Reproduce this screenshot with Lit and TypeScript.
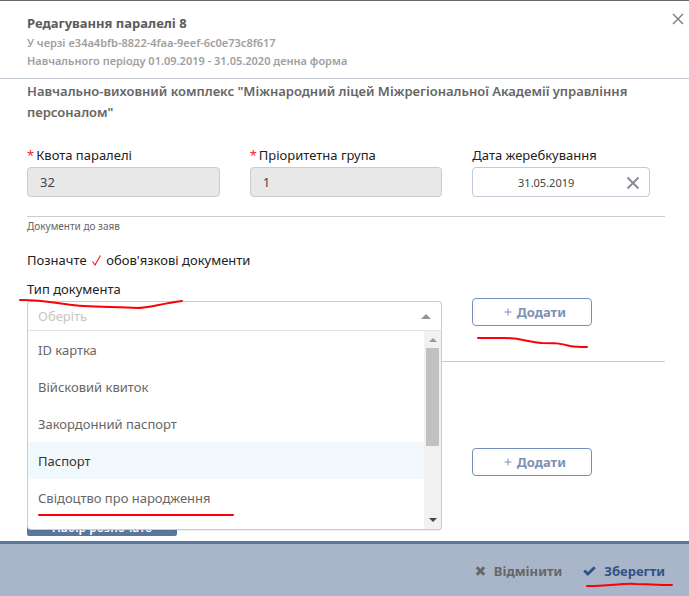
import { LitElement, html, css, svg } from "lit";
import { customElement, state } from "lit/decorators.js";
import { classMap } from "lit/directives/class-map.js";

const mark = (cls: string, w: number, h: number, d: string) => html`
  <svg class="mark ${cls}" width=${w} height=${h} viewBox="0 0 ${w} ${h}" aria-hidden="true">
    ${svg`<path d=${d} />`}
  </svg>
`;

@customElement("app-root")
export class AppRoot extends LitElement {
  static styles = css`
    :host {
      display: block;
      font-family: "Noto Sans", "Open Sans", sans-serif;
      font-size: 13px;
      line-height: 20px;
      color: #222;
      background: #fff;
    }
    * { box-sizing: border-box; }
    .dialog {
      border-top: 1px solid #666;
      min-height: 100vh;
      display: flex;
      flex-direction: column;
    }
    header {
      display: flex;
      justify-content: space-between;
      align-items: flex-start;
      padding: 11px 4px 8px 27px;
      border-bottom: 1px solid #c3cad3;
    }
    h1, h2, p { margin: 0; }
    h1 { font-size: 13px; line-height: 22px; font-weight: 700; color: #5c5c5c; }
    .sub { font-size: 11px; line-height: 18px; font-weight: 600; color: #a0a0a0; }
    button { font: inherit; cursor: pointer; }
    .close {
      display: flex;
      padding: 0;
      border: 0;
      background: none;
      color: #777;
    }
    main { flex: 1; padding: 2px 24px 5px 27px; }
    h2 { font-size: 13px; line-height: 21px; font-weight: 600; color: #666; }
    .grid {
      display: grid;
      grid-template-columns: repeat(3, 1fr);
      column-gap: 30px;
    }
    .fields { margin-top: 22px; }
    .field label { display: block; line-height: 20px; margin-bottom: 2px; }
    .req { color: #f5222d; margin-right: 2px; }
    input {
      width: 100%;
      height: 30px;
      border: 1px solid #ccc;
      border-radius: 4px;
      padding: 0 12px;
      font: inherit;
      color: #444;
      background: #fff;
    }
    input:disabled { background: #e8e8e8; }
    .date { position: relative; margin-right: 15px; }
    .date input {
      display: block;
      border-color: #c3c9d6;
      padding: 0 30px 0 0;
      font-size: 11px;
      text-align: center;
    }
    .date .clear {
      position: absolute;
      right: 10px;
      top: 9px;
      display: flex;
      padding: 0;
      border: 0;
      background: none;
      color: #858a92;
    }
    .section { border-top: 1px solid #ccc; }
    .docs { margin-top: 19px; padding-bottom: 30px; }
    .caption { font-size: 10px; line-height: 18px; color: #666; }
    .hint { margin-top: 15px; line-height: 20px; }
    .hint svg { margin: 0 2px; vertical-align: -1px; }
    .picker { margin-top: 9px; }
    .type { grid-column: span 2; position: relative; }
    .type label { position: relative; display: block; line-height: 20px; }
    .combo { position: relative; margin-top: 2px; }
    select {
      display: block;
      width: 100%;
      height: 30px;
      padding: 0 10px;
      border: 1px solid #ccc;
      border-bottom-color: #e3e3e3;
      border-radius: 4px 4px 0 0;
      appearance: none;
      background: #fff;
      color: #c6c6c6;
      font: inherit;
    }
    .caret { position: absolute; right: 11px; top: 13px; }
    .menu {
      position: absolute;
      z-index: 2;
      top: 100%;
      left: 0;
      right: 0;
      display: flex;
      border: 1px solid #ccc;
      border-top: 0;
      border-radius: 0 0 4px 4px;
      background: #fff;
      box-shadow: 0 1px 0 rgba(0, 0, 0, 0.06);
      overflow: hidden;
    }
    ul { list-style: none; margin: 0; padding: 0; flex: 1; height: 198px; overflow: hidden; }
    li { padding: 9px 10px 8px; line-height: 20px; color: #666; position: relative; }
    li.active { background: #f1f9fc; color: #333; }
    .bar {
      width: 17px;
      background: #f1f1f1;
      display: flex;
      flex-direction: column;
      align-items: center;
      padding: 7px 0;
    }
    .thumb { width: 13px; height: 98px; margin: 6px 0 auto; background: #c1c1c1; }
    .side { position: relative; padding-top: 19px; }
    .add {
      display: flex;
      align-items: center;
      justify-content: center;
      gap: 5px;
      width: 120px;
      height: 28px;
      padding: 0 0 0 5px;
      border: 1px solid #7590b9;
      border-radius: 4px;
      background: #fff;
      color: #7d92b5;
      font-weight: 700;
    }
    .extra .side { padding-top: 86px; }
    .start {
      display: block;
      margin-top: 32px;
      width: 150px;
      height: 28px;
      padding: 10px 0 0;
      border: 0;
      border-radius: 2px;
      background: #5a769f;
      color: #fff;
      font-size: 12px;
      font-weight: 600;
    }
    footer {
      display: flex;
      justify-content: flex-end;
      gap: 21px;
      padding: 17px 24px 15px;
      border-top: 3px solid #5a789f;
      background: #a9b5c9;
    }
    footer button {
      position: relative;
      display: flex;
      align-items: center;
      gap: 8px;
      padding: 0;
      border: 0;
      background: none;
      font-weight: 700;
      line-height: 20px;
      color: #666;
    }
    footer .save { color: #2f5288; }
    .mark {
      position: absolute;
      z-index: 3;
      fill: none;
      stroke: #fb0007;
      stroke-width: 2;
      stroke-linecap: round;
      pointer-events: none;
    }
    .m-type { left: -8px; top: 19px; }
    .m-add { left: 4px; top: 56px; }
    .m-birth { left: 10px; top: 33px; }
    .m-save { left: 3px; top: 21px; }
  `;

  @state() private active = "Паспорт";

  private types = [
    "ID картка",
    "Війсковий квиток",
    "Закордонний паспорт",
    "Паспорт",
    "Свідоцтво про народження",
  ];

  private addButton() {
    return html`<button class="add" type="button">
      <svg width="8" height="8" viewBox="0 0 8 8" aria-hidden="true"><path d="M4 0.500V7.500M0.500 4H7.500" stroke="currentColor" /></svg>
      Додати
    </button>`;
  }

  render() {
    return html`
      <div class="dialog" role="dialog" aria-labelledby="title">
        <header>
          <div>
            <h1 id="title">Редагування паралелі 8</h1>
            <p class="sub">У черзі e34a4bfb-8822-4faa-9eef-6c0e73c8f617</p>
            <p class="sub">Навчального періоду 01.09.2019 - 31.05.2020 денна форма</p>
          </div>
          <button class="close" type="button" aria-label="Закрити">
            <svg width="14" height="14" viewBox="0 0 14 14"><path d="M2 2l10 10M12 2L2 12" stroke="currentColor" stroke-width="1.300" /></svg>
          </button>
        </header>
        <main>
          <h2>Навчально-виховний комплекс "Міжнародний ліцей Міжрегіональної Академії управління персоналом"</h2>
          <div class="grid fields">
            <div class="field">
              <label for="quota"><span class="req">*</span>Квота паралелі</label>
              <input id="quota" value="32" disabled />
            </div>
            <div class="field">
              <label for="group"><span class="req">*</span>Пріоритетна група</label>
              <input id="group" value="1" disabled />
            </div>
            <div class="field">
              <label for="date">Дата жеребкування</label>
              <div class="date">
                <input id="date" value="31.05.2019" />
                <button class="clear" type="button" aria-label="Очистити">
                  <svg width="14" height="14" viewBox="0 0 14 14"><path d="M1.500 1.500l11 11M12.500 1.500l-11 11" stroke="currentColor" stroke-width="1.800" /></svg>
                </button>
              </div>
            </div>
          </div>
          <section class="section docs">
            <p class="caption">Документи до заяв</p>
            <p class="hint">
              Позначте
              <svg width="9" height="11" viewBox="0 0 9 11" aria-hidden="true"><path d="M0.500 6.500L3 10L8.500 0.500" fill="none" stroke="#f5222d" stroke-width="1.200" /></svg>
              обов'язкові документи
            </p>
            <div class="grid picker">
              <div class="type">
                <label for="type">Тип документа ${mark("m-type", 166, 12, "M1 2C30 2 45 7 65 8C85 9 105 9 118 10C130 10 140 6 163 3")}</label>
                <div class="combo">
                  <select id="type"><option>Оберіть</option></select>
                  <svg class="caret" width="10" height="5" viewBox="0 0 10 5" aria-hidden="true"><path d="M0 5L5 0L10 5Z" fill="#949494" /></svg>
                  <div class="menu">
                    <ul role="listbox" aria-label="Тип документа">
                      ${this.types.map(
                        (t) => html`<li
                          role="option"
                          aria-selected=${t === this.active}
                          class=${classMap({ active: t === this.active })}
                          @mouseenter=${() => (this.active = t)}
                        >${t}${t.startsWith("Свідоцтво") ? mark("m-birth", 198, 6, "M1 3H195") : ""}</li>`
                      )}
                    </ul>
                    <div class="bar" aria-hidden="true">
                      <svg width="8" height="4" viewBox="0 0 8 4"><path d="M0 4L4 0L8 4Z" fill="#999" /></svg>
                      <div class="thumb"></div>
                      <svg width="8" height="4" viewBox="0 0 8 4"><path d="M0 0L4 4L8 0Z" fill="#444" /></svg>
                    </div>
                  </div>
                </div>
              </div>
              <div class="side">
                ${this.addButton()}
                ${mark("m-add", 114, 14, "M2 3H28C45 3 52 7 66 8C78 8 84 8 94 11C100 12 105 12 111 12")}
              </div>
            </div>
          </section>
          <section class="section extra">
            <div class="grid">
              <div class="type"></div>
              <div class="side">${this.addButton()}</div>
            </div>
            <button class="start" type="button">Набір розпочато</button>
          </section>
        </main>
        <footer>
          <button type="button">
            <svg width="11" height="10" viewBox="0 0 11 10" aria-hidden="true"><path d="M1.800 1.300l7.400 7.400M9.200 1.300l-7.400 7.400" stroke="currentColor" stroke-width="3" /></svg>
            Відмінити
          </button>
          <button class="save" type="button">
            <svg width="13" height="10" viewBox="0 0 13 10" aria-hidden="true"><path d="M1.200 4.500L4.800 8L11.800 1.200" fill="none" stroke="currentColor" stroke-width="2.800" /></svg>
            Зберегти
            ${mark("m-save", 88, 6, "M1 4C25 4 35 1 50 2C62 2 70 3 86 3")}
          </button>
        </footer>
      </div>
    `;
  }
}
